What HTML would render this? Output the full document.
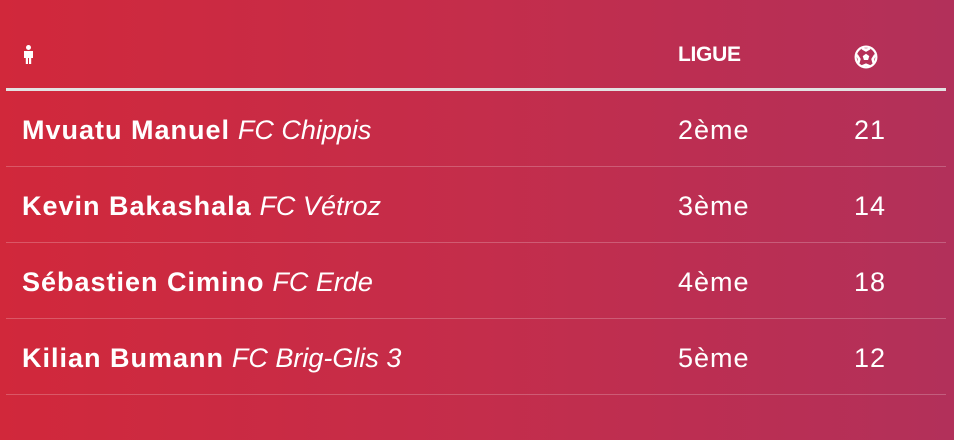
<!DOCTYPE html>
<html><head><meta charset="utf-8"><style>
html,body{margin:0;padding:0}
body{width:954px;height:440px;overflow:hidden;background:linear-gradient(to right,#d1283b,#c42d4b 50%,#b2305a);font-family:"Liberation Sans",sans-serif;color:#fff;position:relative}
.a{position:absolute}
.hl{left:6px;width:940px;height:3px;top:88px;background:#e2e2e2}
.rl{left:6px;width:940px;height:1px;background:rgba(255,255,255,0.22)}
.t{position:absolute;font-size:27px;line-height:30px;letter-spacing:0.3px}
.n{left:22px}
.n b{font-weight:bold;letter-spacing:1px}
.n i{font-style:italic;font-weight:normal;letter-spacing:0px}
.l{left:678px;letter-spacing:1px}
.g{left:854px;letter-spacing:1px}
</style></head><body>
<svg class="a" style="left:23px;top:45px" width="11" height="19" viewBox="0 0 11 19"><circle cx="5.5" cy="2.5" r="2.5" fill="#fff"/><path d="M1 6h9v7h-1.8v6h-2.2v-6h-1v6H2.8v-6H1z" fill="#fff"/></svg>
<div class="a" style="left:678px;top:43px;font-size:21px;font-weight:bold;letter-spacing:-0.3px">LIGUE</div>
<svg class="a" style="left:854px;top:45px" width="24" height="24" viewBox="0 0 22 22"><circle cx="11" cy="11" r="9.5" fill="none" stroke="#fff" stroke-width="2"/><path d="M11 8l3 2.2-1.1 3.5h-3.8L8 10.2z" fill="#fff"/><path d="M7.5 3l3.5 2 3.5-2M2.5 9l2.5 4-1 3.5M19.5 9l-2.5 4 1 3.5M7.5 19.5l3.5-1.5 3.5 1.5" fill="#fff" stroke="#fff" stroke-width="2.2"/></svg>
<div class="a hl"></div>
<div class="t n" style="top:115px"><b>Mvuatu Manuel</b> <i>FC Chippis</i></div>
<div class="t l" style="top:115px">2ème</div><div class="t g" style="top:115px">21</div>
<div class="a rl" style="top:166px"></div>
<div class="t n" style="top:191px"><b>Kevin Bakashala</b> <i>FC Vétroz</i></div>
<div class="t l" style="top:191px">3ème</div><div class="t g" style="top:191px">14</div>
<div class="a rl" style="top:242px"></div>
<div class="t n" style="top:267px"><b>Sébastien Cimino</b> <i>FC Erde</i></div>
<div class="t l" style="top:267px">4ème</div><div class="t g" style="top:267px">18</div>
<div class="a rl" style="top:318px"></div>
<div class="t n" style="top:343px"><b>Kilian Bumann</b> <i>FC Brig-Glis 3</i></div>
<div class="t l" style="top:343px">5ème</div><div class="t g" style="top:343px">12</div>
<div class="a rl" style="top:394px"></div>
</body></html>
